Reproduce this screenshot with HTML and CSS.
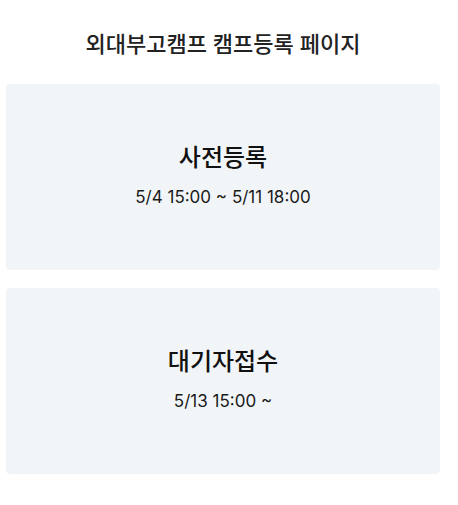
FILE: index.html
```html
<!DOCTYPE html>
<html lang="ko">
<head>
<meta charset="utf-8">
<title>외대부고캠프 캠프등록 페이지</title>
<link rel="stylesheet" href="styles.css">
</head>
<body>
<main class="page">
  <h1 class="page-title">외대부고캠프 캠프등록 페이지</h1>
  <section class="cards">
    <a class="card" href="#">
      <h2 class="card-title">사전등록</h2>
      <p class="card-date">5/4 15:00 ~ 5/11 18:00</p>
    </a>
    <a class="card" href="#">
      <h2 class="card-title">대기자접수</h2>
      <p class="card-date">5/13 15:00 ~</p>
    </a>
  </section>
</main>
</body>
</html>
```

FILE: styles.css
```css
* {
  box-sizing: border-box;
}

body {
  margin: 0;
  background: #ffffff;
  color: #1a1a1a;
  font-family: "Inter", "Noto Sans CJK KR", sans-serif;
}

.page {
  padding: 29px 18px 0 6px;
}

.page-title {
  margin: 0 0 25px;
  font-size: 22px;
  line-height: 30px;
  font-weight: 500;
  text-align: center;
  color: #222222;
}

.cards {
  display: flex;
  flex-direction: column;
  gap: 18px;
}

.card {
  display: flex;
  flex-direction: column;
  align-items: center;
  justify-content: center;
  height: 186px;
  border-radius: 4px;
  background: #f2f5f8;
  color: inherit;
  text-decoration: none;
}

.card-title {
  margin: 0 0 11px;
  font-size: 24px;
  line-height: 32px;
  font-weight: 500;
  color: #111111;
}

.card-date {
  margin: 0 0 4px;
  font-size: 17px;
  line-height: 24px;
  color: #1a1a1a;
}
```
